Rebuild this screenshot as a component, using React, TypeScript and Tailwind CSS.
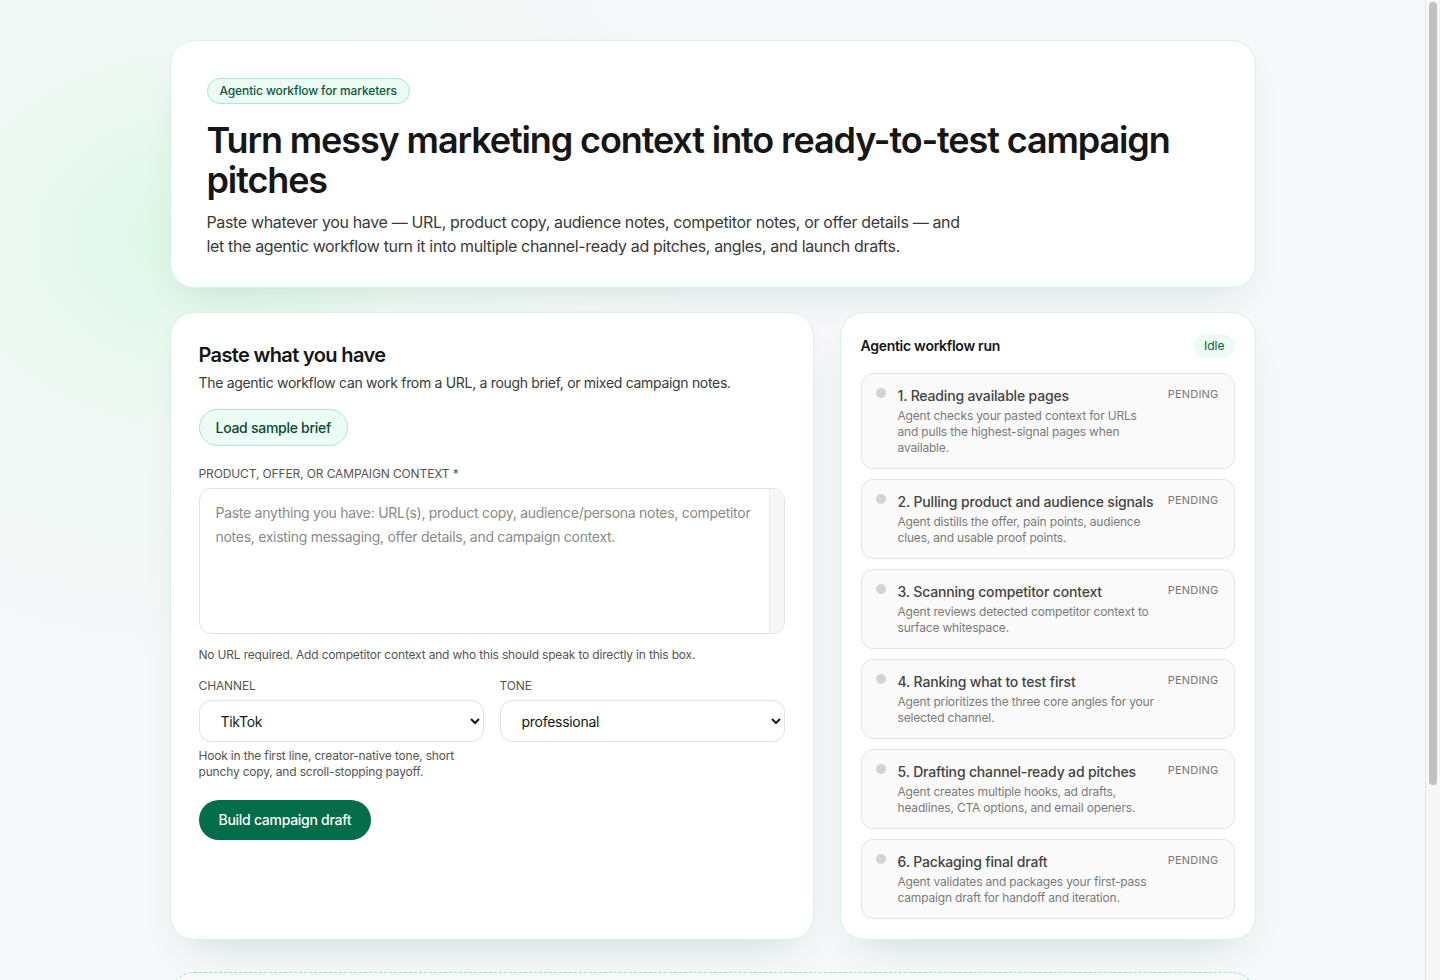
import { ChangeEvent, useState } from "react";

const steps = [
  {
    title: "1. Reading available pages",
    text: "Agent checks your pasted context for URLs and pulls the highest-signal pages when available.",
  },
  {
    title: "2. Pulling product and audience signals",
    text: "Agent distills the offer, pain points, audience clues, and usable proof points.",
  },
  {
    title: "3. Scanning competitor context",
    text: "Agent reviews detected competitor context to surface whitespace.",
  },
  {
    title: "4. Ranking what to test first",
    text: "Agent prioritizes the three core angles for your selected channel.",
  },
  {
    title: "5. Drafting channel-ready ad pitches",
    text: "Agent creates multiple hooks, ad drafts, headlines, CTA options, and email openers.",
  },
  {
    title: "6. Packaging final draft",
    text: "Agent validates and packages your first-pass campaign draft for handoff and iteration.",
  },
];

export default function App() {
  const [brief, setBrief] = useState("");
  const [channel, setChannel] = useState("TikTok");
  const [tone, setTone] = useState("professional");

  return (
    <div className="min-h-screen bg-[#f6f8f9] bg-[radial-gradient(ellipse_520px_420px_at_190px_240px,#dcf7e7_0%,rgba(236,250,242,0.6)_45%,transparent_100%)] pr-[15px] font-['Inter','Liberation_Sans',sans-serif] text-[#1a1a1a]">
      <main className="mx-auto max-w-[1086px] pt-10 pb-10">
        <section className="rounded-[24px] border border-[#d3f5e4] bg-white px-9 pt-9 pb-[29px] shadow-[0_18px_40px_-18px_rgba(20,90,60,0.16)]">
          <span className="inline-flex h-[26px] items-center rounded-full border border-[#a7ebc9] bg-[#ecfbf3] px-3 text-xs font-medium tracking-[-0.01em] text-[#0b5a3c]">
            Agentic workflow for marketers
          </span>
          <h1 className="mt-4 text-[36px] leading-10 font-semibold tracking-[-0.031em] text-[#161616]">
            Turn messy marketing context into ready-to-test campaign pitches
          </h1>
          <p className="mt-[10px] max-w-[760px] text-base leading-6 tracking-[-0.022em] text-[#3a3a3a]">
            Paste whatever you have — URL, product copy, audience notes, competitor notes, or offer details — and let the agentic workflow turn it into multiple channel-ready ad pitches, angles, and launch drafts.
          </p>
        </section>

        <div className="mt-6 grid grid-cols-[minmax(0,1fr)_416px] gap-[26px]">
          <section className="rounded-[24px] border border-[#d3f5e4] bg-white px-7 pt-7 pb-7 shadow-[0_20px_44px_-20px_rgba(20,90,60,0.2)]">
            <h2 className="text-xl leading-7 font-semibold tracking-[-0.032em] text-[#161616]">Paste what you have</h2>
            <p className="mt-1 text-sm tracking-[-0.022em] text-[#3a3a3a]">
              The agentic workflow can work from a URL, a rough brief, or mixed campaign notes.
            </p>
            <button className="mt-4 h-[37px] rounded-full border border-[#a7ebc9] bg-[#ecfbf3] px-4 text-sm font-medium tracking-[-0.02em] text-[#0b4a32]">
              Load sample brief
            </button>
            <label className="mt-5 block text-xs tracking-[-0.01em] text-[#555]">
              PRODUCT, OFFER, OR CAMPAIGN CONTEXT *
            </label>
            <div className="mt-1.5 flex h-[146px] overflow-hidden rounded-xl border border-[#e2e2e2]">
              <textarea
                value={brief}
                onChange={(e: ChangeEvent<HTMLTextAreaElement>) => setBrief(e.target.value)}
                placeholder="Paste anything you have: URL(s), product copy, audience/persona notes, competitor notes, existing messaging, offer details, and campaign context."
                className="block h-full min-w-0 flex-1 resize-none px-4 py-3 text-sm leading-6 tracking-[-0.02em] text-[#222] outline-none placeholder:text-[#8a8a8a]"
              />
              <div className="w-[15px] shrink-0 border-l border-[#ececec] bg-[#f7f7f7]" />
            </div>
            <p className="mt-[13px] text-xs tracking-[-0.015em] text-[#555]">
              No URL required. Add competitor context and who this should speak to directly in this box.
            </p>
            <div className="mt-[15px] grid grid-cols-2 gap-4">
              <div>
                <label className="block text-xs tracking-[-0.01em] text-[#555]">CHANNEL</label>
                <select
                  value={channel}
                  onChange={(e) => setChannel(e.target.value)}
                  className="mt-1.5 h-[42px] w-full rounded-xl border border-[#e2e2e2] bg-white pr-2 pl-[17px] text-sm tracking-[-0.02em] text-[#161616] outline-none"
                >
                  <option>TikTok</option>
                  <option>Meta</option>
                  <option>LinkedIn</option>
                  <option>Google Search</option>
                  <option>Email</option>
                </select>
                <p className="mt-1.5 text-xs leading-4 tracking-[-0.015em] text-[#555]">
                  Hook in the first line, creator-native tone, short punchy copy, and scroll-stopping payoff.
                </p>
              </div>
              <div>
                <label className="block text-xs tracking-[-0.01em] text-[#555]">TONE</label>
                <select
                  value={tone}
                  onChange={(e) => setTone(e.target.value)}
                  className="mt-1.5 h-[42px] w-full rounded-xl border border-[#e2e2e2] bg-white pr-2 pl-[17px] text-sm tracking-[-0.02em] text-[#161616] outline-none"
                >
                  <option>professional</option>
                  <option>playful</option>
                  <option>bold</option>
                  <option>friendly</option>
                </select>
              </div>
            </div>
            <button className="mt-5 h-10 rounded-full bg-[#036c49] px-5 text-sm font-medium tracking-[-0.02em] text-white">
              Build campaign draft
            </button>
          </section>

          <section className="rounded-[24px] border border-[#d3f5e4] bg-white px-5 pt-[21px] pb-5 shadow-[0_20px_44px_-20px_rgba(20,90,60,0.2)]">
            <div className="flex items-center justify-between">
              <h3 className="text-sm font-semibold tracking-[-0.02em] text-[#161616]">Agentic workflow run</h3>
              <span className="rounded-full bg-[#ecfbf3] px-2.5 py-1 text-xs text-[#0b5a3c]">Idle</span>
            </div>
            <ol className="mt-[15px] flex flex-col gap-[10px]">
              {steps.map((s) => (
                <li
                  key={s.title}
                  className="flex items-start gap-3 rounded-xl border border-[#e3e3e3] bg-[#fafafa] pt-3 pr-[15px] pb-3 pl-[14px]"
                >
                  <span className="mt-[2px] h-2.5 w-2.5 shrink-0 rounded-full bg-[#d2d2d8]" />
                  <div className="min-w-0 flex-1">
                    <div className="text-sm leading-5 font-medium tracking-[-0.012em] text-[#444]">{s.title}</div>
                    <p className="mt-0.5 max-w-[262px] text-xs leading-4 tracking-[-0.015em] text-[#7a7a7a]">{s.text}</p>
                  </div>
                  <span className="text-[11px] leading-4 tracking-[0.02em] text-[#777]">PENDING</span>
                </li>
              ))}
            </ol>
          </section>
        </div>

        <section className="mt-8 h-[220px] rounded-[24px] border border-dashed border-[#8ee9c8] bg-white/40" />
      </main>

      <div className="fixed top-0 right-0 bottom-0 w-[15px] border-l border-[#e4e4e4] bg-[#f7f7f7]">
        <div className="mx-auto mt-[2px] h-[783px] w-[8px] rounded-full bg-[#c1c1c1]" />
      </div>
    </div>
  );
}
